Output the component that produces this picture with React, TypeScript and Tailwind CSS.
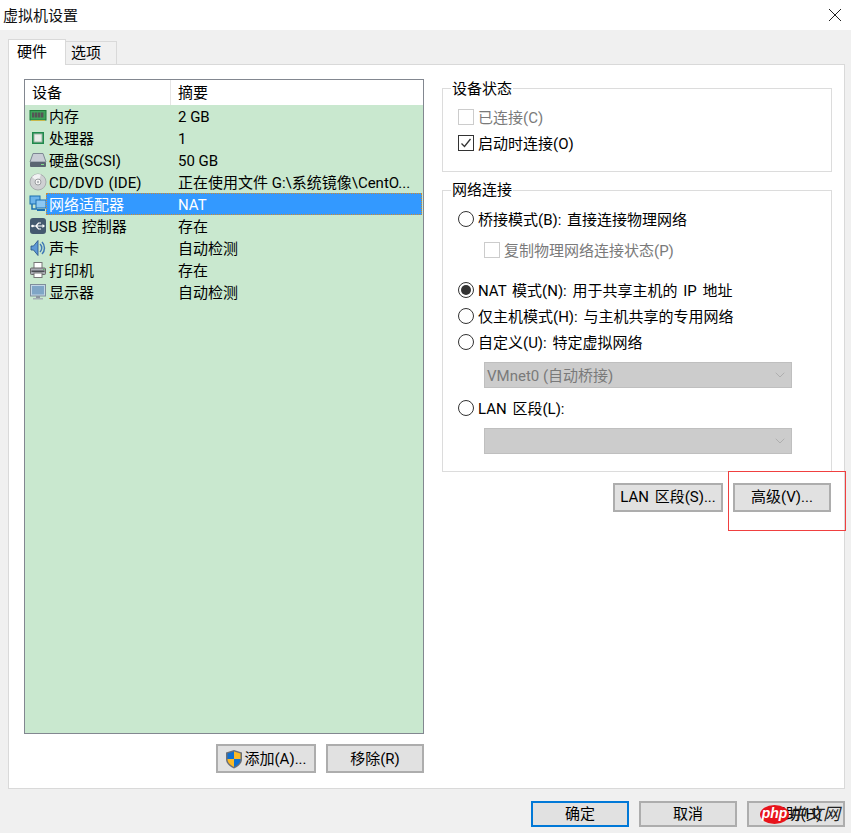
import React from 'react';
import { ChevronDown } from 'lucide-react';

const MemoryIcon = () => (
  <svg width="18" height="18" viewBox="0 0 18 18">
    <rect x="1" y="3.500" width="16" height="9.500" fill="#3fa45b" stroke="#1f7a3a" />
    <rect x="3" y="5.500" width="2.400" height="5" fill="#555" />
    <rect x="6" y="5.500" width="2.400" height="5" fill="#555" />
    <rect x="9" y="5.500" width="2.400" height="5" fill="#555" />
    <rect x="12" y="5.500" width="2.400" height="5" fill="#555" />
    <path d="M2 13.500h14" stroke="#c8b84a" />
  </svg>
);

const CpuIcon = () => (
  <svg width="18" height="18" viewBox="0 0 18 18">
    <rect x="3" y="3" width="12" height="12" fill="#1f8a4c" />
    <rect x="5" y="5" width="8" height="8" fill="#e8ece8" stroke="#9fb5a5" />
  </svg>
);

const DiskIcon = () => (
  <svg width="18" height="18" viewBox="0 0 18 18">
    <path d="M4 2.500h10l3 8.500H1z" fill="#c9ced6" stroke="#7d8794" />
    <rect x="1" y="11" width="16" height="5" rx="1" fill="#5b6572" />
    <rect x="12" y="13" width="3" height="1" fill="#7fe08a" />
  </svg>
);

const CdIcon = () => (
  <svg width="18" height="18" viewBox="0 0 18 18">
    <circle cx="9" cy="9" r="8" fill="#cfd1d3" stroke="#a8abae" />
    <path d="M9 9L3 4a8 8 0 0 1 9-2.500z" fill="#f2f3f4" />
    <circle cx="9" cy="9" r="3" fill="#f6f6f6" stroke="#9a9da0" />
    <circle cx="9" cy="9" r="1.200" fill="#b5b8bb" />
  </svg>
);

const NetworkIcon = () => (
  <svg width="18" height="18" viewBox="0 0 18 18">
    <rect x="1" y="1" width="10" height="8" fill="#6db4ea" stroke="#1d6fb0" />
    <path d="M3 9v5h5" fill="none" stroke="#1d6fb0" strokeWidth="1.500" />
    <rect x="7" y="5" width="10" height="8" fill="#8cc8f2" stroke="#1d6fb0" />
    <rect x="8" y="14" width="8" height="2" fill="#1d6fb0" />
  </svg>
);

const UsbIcon = () => (
  <svg width="18" height="18" viewBox="0 0 18 18">
    <rect x="1" y="1" width="16" height="16" rx="3" fill="#44596f" />
    <path d="M3 9h11M7 9l2.500-3H12M7 9l2.500 3H12" fill="none" stroke="#fff" strokeWidth="1.200" />
    <path d="M13.500 7l2.500 2-2.500 2z" fill="#fff" />
    <circle cx="3.500" cy="9" r="1.300" fill="#fff" />
  </svg>
);

const SpeakerIcon = () => (
  <svg width="18" height="18" viewBox="0 0 18 18">
    <path d="M2 7h2.500L9 1.500v15L4.500 11H2z" fill="#5f9ad6" stroke="#254f86" strokeWidth="0.800" />
    <path d="M11 5a5.500 5.500 0 0 1 0 8M13 3a8.500 8.500 0 0 1 0 12" fill="none" stroke="#3f78b5" strokeWidth="1.500" />
  </svg>
);

const PrinterIcon = () => (
  <svg width="18" height="18" viewBox="0 0 18 18">
    <rect x="5" y="1.500" width="8" height="6" fill="#fff" stroke="#777" />
    <rect x="1.500" y="7" width="15" height="6.500" rx="1" fill="#a9adb4" stroke="#666" />
    <rect x="2.500" y="9.500" width="13" height="1.500" fill="#4a4d52" />
    <rect x="5" y="12" width="8" height="4.500" fill="#fff" stroke="#777" />
    <rect x="14" y="8" width="1.400" height="1" fill="#4cc45a" />
  </svg>
);

const MonitorIcon = () => (
  <svg width="18" height="18" viewBox="0 0 18 18">
    <rect x="1.500" y="1.500" width="15" height="11.500" fill="#c3d6e6" stroke="#7f8d9b" />
    <rect x="3" y="3" width="12" height="8.500" fill="#7fa5c6" />
    <rect x="7" y="13" width="4" height="2" fill="#8a949e" />
    <rect x="4" y="15" width="10" height="1.500" fill="#a4adb5" />
  </svg>
);

const ShieldIcon = () => (
  <svg width="18" height="20" viewBox="0 0 18 20">
    <path d="M9 1l8 2.500V10c0 4.500-3.500 7.500-8 9.500C4.500 17.500 1 14.500 1 10V3.500z" fill="#6b7078" />
    <path d="M9 2.500L2.500 4.500V10H9z" fill="#0f6fd0" />
    <path d="M9 2.500l6.500 2V10H9z" fill="#fbb924" />
    <path d="M2.500 10H9v8c-3.500-1.700-6.500-4.200-6.500-8z" fill="#fbb924" />
    <path d="M15.500 10H9v8c3.500-1.700 6.500-4.200 6.500-8z" fill="#0f6fd0" />
  </svg>
);

const devices = [
  { icon: <MemoryIcon />, name: '内存', summary: '2 GB' },
  { icon: <CpuIcon />, name: '处理器', summary: '1' },
  { icon: <DiskIcon />, name: '硬盘(SCSI)', summary: '50 GB' },
  { icon: <CdIcon />, name: 'CD/DVD (IDE)', summary: '正在使用文件 G:\\系统镜像\\CentO...' },
  { icon: <NetworkIcon />, name: '网络适配器', summary: 'NAT', selected: true },
  { icon: <UsbIcon />, name: 'USB 控制器', summary: '存在' },
  { icon: <SpeakerIcon />, name: '声卡', summary: '自动检测' },
  { icon: <PrinterIcon />, name: '打印机', summary: '存在' },
  { icon: <MonitorIcon />, name: '显示器', summary: '自动检测' },
];

function Radio({ label, checked }: { label: string; checked?: boolean }) {
  return (
    <div className="flex items-center h-[26px] pl-[15px] gap-[4px]">
      <span className="w-[16px] h-[16px] rounded-full border border-[#333] bg-white flex items-center justify-center">
        {checked && <span className="w-[10px] h-[10px] rounded-full bg-[#333]" />}
      </span>
      <span className="whitespace-pre pt-[2px] [word-spacing:2px]">{label}</span>
    </div>
  );
}

function Check({ label, checked, disabled, className }: { label: string; checked?: boolean; disabled?: boolean; className?: string }) {
  return (
    <div className={`flex items-center h-[26px] gap-[4px] ${className ?? 'pl-[15px]'} ${disabled ? 'text-[#7a7a7a]' : ''}`}>
      <span className={`w-[16px] h-[16px] border flex items-center justify-center bg-white ${disabled ? 'border-[#cccccc]' : 'border-[#333]'}`}>
        {checked && (
          <svg width="12" height="12" viewBox="0 0 12 12">
            <path d="M1.500 6.500l3 3 6-7.500" fill="none" stroke="#333" strokeWidth="1.300" />
          </svg>
        )}
      </span>
      <span className="pt-[2px]">{label}</span>
    </div>
  );
}

function Select({ value }: { value?: string }) {
  return (
    <div className="ml-[41px] w-[308px] h-[26px] bg-[#cccccc] border border-[#bfbfbf] flex items-center justify-between pl-[2px] pr-[3px] text-[#7a7a7a]">
      <span className="pt-[2px]">{value}</span>
      <ChevronDown size={16} strokeWidth={1} className="text-[#a0a0a0]" />
    </div>
  );
}

function Button({ children, className }: { children: React.ReactNode; className?: string }) {
  return (
    <button className={`h-[29px] bg-[#e1e1e1] border-2 border-[#adadad] flex items-center justify-center ${className ?? ''}`}>
      {children}
    </button>
  );
}

export default function App() {
  return (
    <div className="relative w-[851px] h-[833px] overflow-hidden bg-[#f0f0f0] text-[15px] leading-[20px] text-black font-['Roboto','Noto_Sans_CJK_SC',sans-serif]">
      <div className="h-[30px] bg-white flex items-center justify-between pl-[3px] pr-[9px]">
        <span className="text-[#111] pt-[2px]">虚拟机设置</span>
        <svg width="14" height="14" viewBox="0 0 14 14">
          <path d="M1 1l12 12M13 1L1 13" stroke="#222" strokeWidth="1" />
        </svg>
      </div>

      <div className="flex items-end h-[34px] pl-[8px]">
        <div className="relative z-10 w-[58px] h-[26px] -mb-px bg-white border border-b-0 border-[#d9d9d9] pl-[8px] pt-[2px]">硬件</div>
        <div className="w-[51px] h-[23px] border border-l-0 border-b-0 border-[#d9d9d9] pl-[5px] pt-[1px]">选项</div>
      </div>

      <div className="ml-[8px] w-[837px] h-[725px] bg-white border border-[#d9d9d9] flex pl-[15px] pt-[13px]">
        <div className="w-[400px] mt-[1px]">
          <div className="h-[655px] border border-[#828790] bg-[#c9e8cf]">
            <div className="flex h-[25px] bg-white items-center">
              <div className="w-[146px] h-full pl-[7px] pt-[1px] flex items-center border-r border-[#e5e5e5]">设备</div>
              <div className="pl-[7px] pt-[1px]">摘要</div>
            </div>
            {devices.map((d) => (
              <div key={d.name} className="flex h-[22px] items-center">
                <div className="w-[21px] pl-[4px] shrink-0">{d.icon}</div>
                {d.selected ? (
                  <div className="flex-1 mr-[1px] h-[22px] flex items-center bg-[#3399ff] text-white border border-dotted border-[#d08a30] pl-[2px] pt-[2px]">
                    <span className="w-[129px] shrink-0">{d.name}</span>
                    <span>{d.summary}</span>
                  </div>
                ) : (
                  <div className="flex-1 flex items-center pl-[3px] pt-[2px]">
                    <span className="w-[129px] shrink-0 whitespace-nowrap [word-spacing:1px]">{d.name}</span>
                    <span className="whitespace-nowrap">{d.summary}</span>
                  </div>
                )}
              </div>
            ))}
          </div>
          <div className="flex justify-end gap-[10px] mt-[10px]">
            <Button className="w-[100px] gap-[1px]">
              <ShieldIcon />
              <span>添加(A)...</span>
            </Button>
            <Button className="w-[98px]">移除(R)</Button>
          </div>
        </div>

        <div className="ml-[18px] w-[390px]">
          <fieldset className="h-[94px] border border-[#dcdcdc]">
            <legend className="ml-[8px] px-[1px] leading-[20px] pt-[1px]">设备状态</legend>
            <div className="pt-[5px]">
              <Check label="已连接(C)" disabled />
              <Check label="启动时连接(O)" checked />
            </div>
          </fieldset>

          <fieldset className="mt-[8px] h-[292px] border border-[#dcdcdc]">
            <legend className="ml-[8px] px-[1px] leading-[20px]">网络连接</legend>
            <div className="pt-[6px]">
              <Radio label="桥接模式(B): 直接连接物理网络" />
              <Check label="复制物理网络连接状态(P)" disabled className="pl-[41px] mt-[5px]" />
              <div className="mt-[14px]">
                <Radio label="NAT 模式(N): 用于共享主机的 IP 地址" checked />
                <Radio label="仅主机模式(H): 与主机共享的专用网络" />
                <Radio label="自定义(U): 特定虚拟网络" />
              </div>
              <div className="mt-[7px]">
                <Select value="VMnet0 (自动桥接)" />
              </div>
              <div className="mt-[7px]">
                <Radio label="LAN 区段(L):" />
              </div>
              <div className="mt-[7px]">
                <Select />
              </div>
            </div>
          </fieldset>

          <div className="flex justify-end gap-[10px] mt-[11px] pr-[1px]">
            <Button className="w-[110px] pb-[2px] [word-spacing:2px]">LAN 区段(S)...</Button>
            <Button className="w-[98px] pb-[2px]">高级(V)...</Button>
          </div>
        </div>
      </div>

      <div className="flex justify-end gap-[10px] mt-[12px] pr-[6px]">
        <button className="w-[98px] h-[26px] bg-[#e1e1e1] border-2 border-[#0078d7]">确定</button>
        <button className="w-[98px] h-[26px] bg-[#e1e1e1] border-2 border-[#adadad]">取消</button>
        <button className="w-[98px] h-[26px] bg-[#e1e1e1] border-2 border-[#adadad]">帮助(H)</button>
      </div>

      {/* red annotation box */}
      <div className="absolute left-[728px] top-[471px] w-[118px] h-[60px] border border-[#f04040]" />

      {/* watermark */}
      <div className="absolute left-[760px] top-[804px] flex items-center">
        <span className="w-[29px] h-[19px] rounded-[50%] bg-[#e8141c] text-white text-[14px] leading-[17px] italic font-bold text-center font-['Liberation_Sans',sans-serif]">php</span>
        <span className="text-[#222] text-[17px] italic">中文网</span>
      </div>
    </div>
  );
}
